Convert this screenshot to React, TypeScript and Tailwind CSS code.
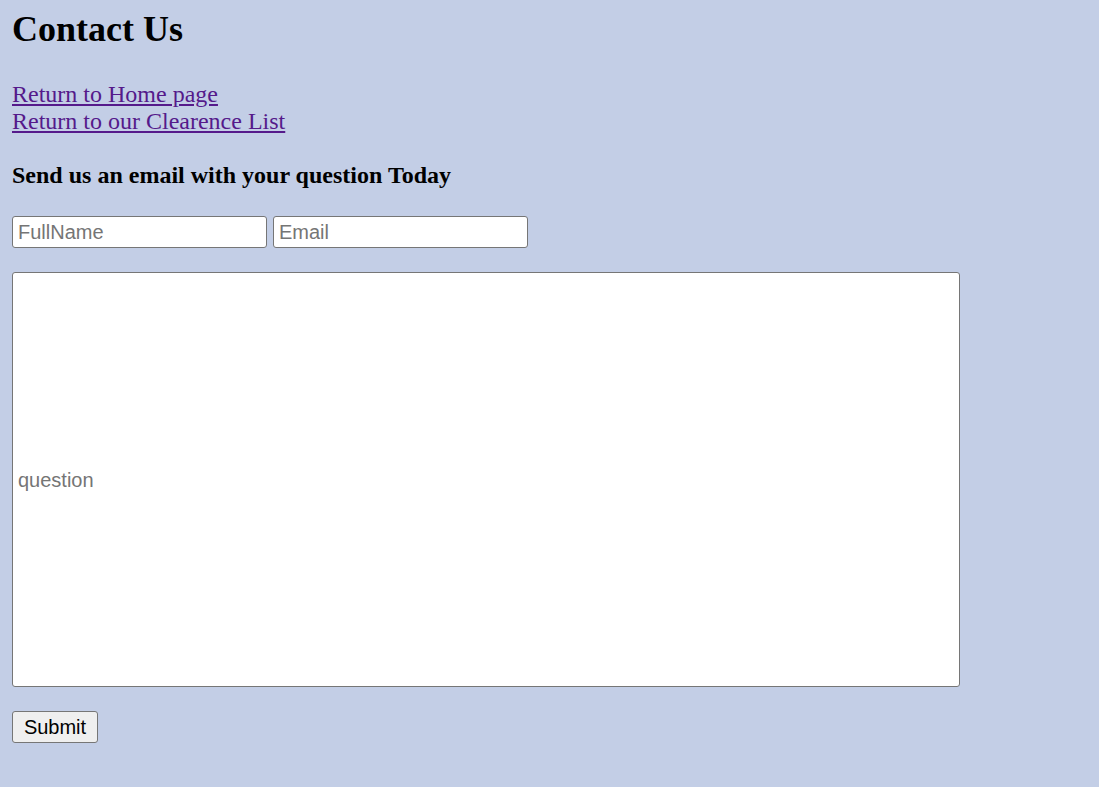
export default function App() {
  return (
    <div className="min-h-screen w-full bg-[#c3cee6] px-[12px] pt-[9px] pb-[40px] font-['Liberation_Serif',serif] text-black">
      <h1 className="text-[36px] leading-[41px] font-bold">Contact Us</h1>

      <div className="mt-[31px] flex flex-col items-start text-[24px] leading-[27px]">
        <a href="#" className="text-[#551a8b] underline">Return to Home page</a>
        <a href="#" className="text-[#551a8b] underline">Return to our Clearence List</a>
      </div>

      <h3 className="mt-[27px] text-[24px] leading-[27px] font-bold">Send us an email with your question Today</h3>

      <form className="mt-[27px] flex flex-col items-start font-['Liberation_Sans',sans-serif]">
        <div className="flex gap-[6px]">
          <input
            type="text"
            placeholder="FullName"
            className="h-[32px] w-[255px] rounded-[3px] border border-[#767676] bg-white px-[5px] text-[20px] placeholder:text-[#757575]"
          />
          <input
            type="text"
            placeholder="Email"
            className="h-[32px] w-[255px] rounded-[3px] border border-[#767676] bg-white px-[5px] text-[20px] placeholder:text-[#757575]"
          />
        </div>

        <div className="mt-[24px] flex h-[415px] w-[948px] items-center rounded-[3px] border border-[#767676] bg-white px-[5px]">
          <input
            type="text"
            placeholder="question"
            className="w-full bg-transparent text-[20px] outline-none placeholder:text-[#757575]"
          />
        </div>

        <button
          type="submit"
          className="mt-[24px] h-[32px] w-[86px] rounded-[3px] border border-[#767676] bg-[#efefef] text-[20px] text-black"
        >
          Submit
        </button>
      </form>
    </div>
  )
}
